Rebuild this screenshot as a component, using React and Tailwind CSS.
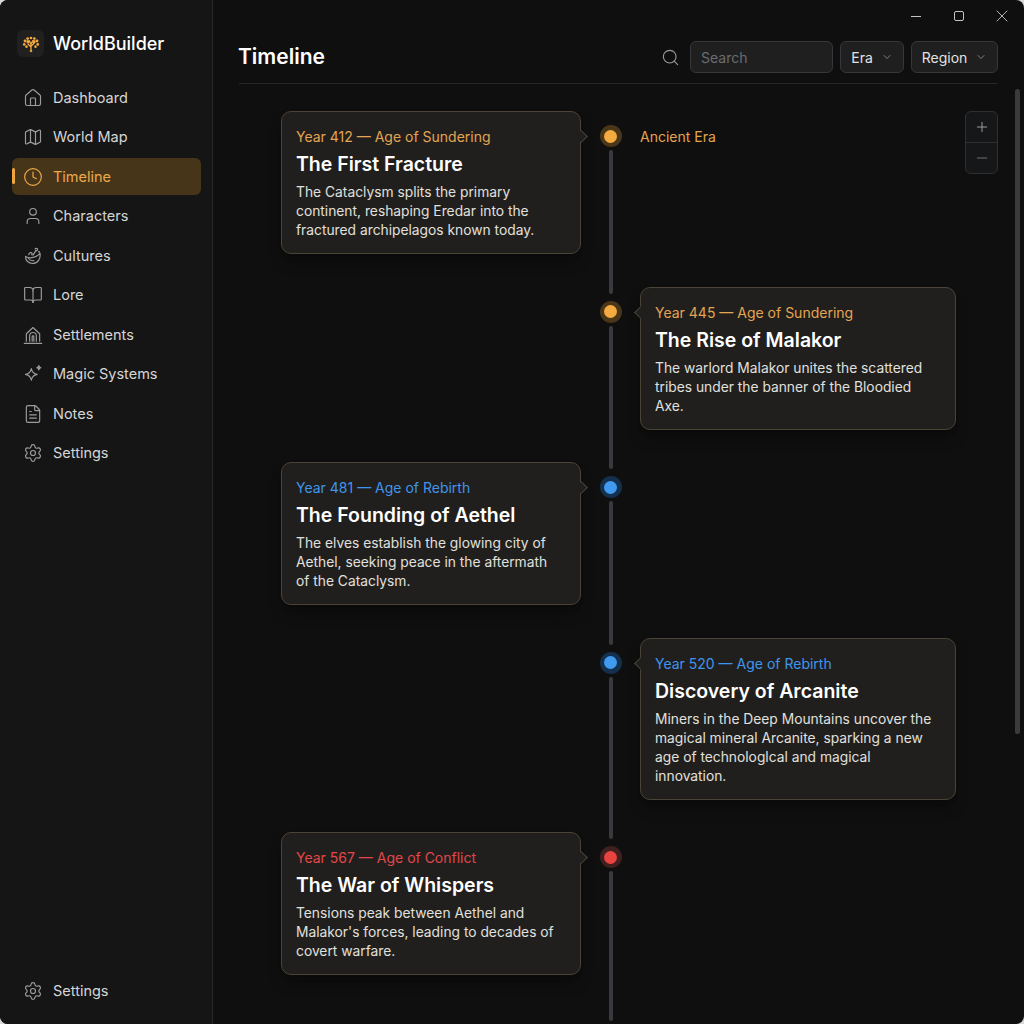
import { House, Map, Clock, User, BookOpen, FileText, Settings, Search, ChevronDown, Plus, Minus, X } from 'lucide-react';

// Sidebar icons the packages have no match for
const CulturesIcon = (props) => (
  <svg viewBox="0 0 24 24" fill="none" stroke="currentColor" strokeWidth="1.4" strokeLinecap="round" strokeLinejoin="round" {...props}>
    <path d="M3 12.500c2.500 1.500 5 2 8 1.500 4-.6 7-2.500 9.500-5 .8 6-2.500 12-9 12-5 0-8.500-3.500-8.500-8.500z" />
    <path d="M6.500 15c1.500 2 4 3 6.500 2.500" />
    <path d="M7 10.500c0-2 1.500-3 3-2.500 1.300.5 1.300 2.200.2 2.500" />
    <path d="M12 11l3.500-5.500" />
    <path d="M14.500 3.500c1-1 2.800-.8 3 .5.2 1.300-1.300 2-2.300 1.300" />
    <path d="M18.500 7c.8-.4 1.500 0 1.500.8" />
  </svg>
);

const SettlementsIcon = (props) => (
  <svg viewBox="0 0 24 24" fill="none" stroke="currentColor" strokeWidth="1.4" strokeLinecap="round" strokeLinejoin="round" {...props}>
    <path d="M1.500 22h21" />
    <path d="M4 19.500V10.500L12 3l8 7.500v9" />
    <path d="M8 19.500V13a4 4 0 0 1 8 0v6.500" />
    <path d="M11 19.500V14a1 1 0 0 1 2 0v5.500" />
  </svg>
);

const MagicIcon = (props) => (
  <svg viewBox="0 0 24 24" fill="none" stroke="currentColor" strokeWidth="1.4" strokeLinecap="round" strokeLinejoin="round" {...props}>
    <path d="M10 5.500c.8 4.300 2.700 6.200 7 7-4.300.8-6.200 2.700-7 7-.8-4.300-2.700-6.200-7-7 4.300-.8 6.200-2.700 7-7z" />
    <path d="M19 2c.3 1.500.9 2.200 2.500 2.500-1.600.3-2.200 1-2.500 2.500-.3-1.500-.9-2.200-2.500-2.500C18.100 4.200 18.700 3.500 19 2z" fill="currentColor" />
  </svg>
);

const LogoIcon = (props) => (
  <svg viewBox="0 0 24 24" fill="#f2a83e" stroke="#f2a83e" strokeLinecap="round" {...props}>
    <path d="M12 22v-9M12 16l-4-4M12 15l4-4M12 12l-2.500-4.500M12 12l2.500-4.500" fill="none" strokeWidth="1.800" />
    <g stroke="none">
      <circle cx="12" cy="4" r="1.800" />
      <circle cx="7.500" cy="4.800" r="1.800" />
      <circle cx="16.500" cy="4.800" r="1.800" />
      <circle cx="4" cy="8" r="1.900" />
      <circle cx="20" cy="8" r="1.900" />
      <circle cx="3" cy="12.500" r="1.800" />
      <circle cx="21" cy="12.500" r="1.800" />
      <circle cx="6" cy="15.500" r="1.700" />
      <circle cx="18" cy="15.500" r="1.700" />
      <circle cx="8" cy="9" r="2.200" />
      <circle cx="16" cy="9" r="2.200" />
      <path d="M10 22h4l-1-2h-2z" />
    </g>
  </svg>
);

const navItems = [
  { label: 'Dashboard', icon: House },
  { label: 'World Map', icon: Map },
  { label: 'Timeline', icon: Clock, active: true },
  { label: 'Characters', icon: User },
  { label: 'Cultures', icon: CulturesIcon },
  { label: 'Lore', icon: BookOpen },
  { label: 'Settlements', icon: SettlementsIcon },
  { label: 'Magic Systems', icon: MagicIcon },
  { label: 'Notes', icon: FileText },
  { label: 'Settings', icon: Settings },
];

const eras = {
  sundering: { text: 'text-[#e3a552]', dot: 'bg-[#f5ab3f]', ring: 'bg-[#4a3719]' },
  rebirth: { text: 'text-[#3f95ec]', dot: 'bg-[#409bf0]', ring: 'bg-[#14304d]' },
  conflict: { text: 'text-[#e2474a]', dot: 'bg-[#e8433f]', ring: 'bg-[#401f1f]' },
};

const events = [
  {
    side: 'left',
    era: 'sundering',
    year: 'Year 412 — Age of Sundering',
    title: 'The First Fracture',
    body: 'The Cataclysm splits the primary continent, reshaping Eredar into the fractured archipelagos known today.',
    label: 'Ancient Era',
  },
  {
    side: 'right',
    era: 'sundering',
    year: 'Year 445 — Age of Sundering',
    title: 'The Rise of Malakor',
    body: 'The warlord Malakor unites the scattered tribes under the banner of the Bloodied Axe.',
  },
  {
    side: 'left',
    era: 'rebirth',
    year: 'Year 481 — Age of Rebirth',
    title: 'The Founding of Aethel',
    body: 'The elves establish the glowing city of Aethel, seeking peace in the aftermath of the Cataclysm.',
  },
  {
    side: 'right',
    era: 'rebirth',
    year: 'Year 520 — Age of Rebirth',
    title: 'Discovery of Arcanite',
    body: 'Miners in the Deep Mountains uncover the magical mineral Arcanite, sparking a new age of technologlcal and magical innovation.',
  },
  {
    side: 'left',
    era: 'conflict',
    year: 'Year 567 — Age of Conflict',
    title: 'The War of Whispers',
    body: "Tensions peak between Aethel and Malakor's forces, leading to decades of covert warfare.",
    last: true,
  },
];

function NavRow({ item }) {
  const Icon = item.icon;
  return (
    <a
      className={`relative flex h-[37px] items-center gap-[10px] rounded-md px-[11px] text-[14.5px] ${
        item.active ? 'bg-[#47351a] text-[#eda94a]' : 'text-[#d6d6d6]'
      }`}
    >
      {item.active && <span className="absolute left-0 top-[10px] h-[16px] w-[3px] rounded-full bg-[#f0a63e]" />}
      <Icon className={`h-[20px] w-[20px] shrink-0 ${item.active ? 'text-[#eda94a]' : 'text-[#9c9c9c]'}`} strokeWidth={1.4} />
      {item.label}
    </a>
  );
}

function EventCard({ event }) {
  const era = eras[event.era];
  const isLeft = event.side === 'left';
  return (
    <div className="relative rounded-[10px] border border-[#4a4336] bg-[#211f1d] px-[14px] pb-[13px] pt-[14px] shadow-lg shadow-black/30">
      <span
        className={`absolute top-[20px] h-[9px] w-[9px] rotate-45 bg-[#211f1d] ${
          isLeft
            ? 'right-[-5.5px] border-r border-t border-[#4a4336]'
            : 'left-[-5.5px] border-b border-l border-[#4a4336]'
        }`}
      />
      <p className={`text-[14px] leading-[21px] ${era.text}`}>{event.year}</p>
      <h3 className="mt-[3px] text-[19.5px] font-semibold leading-[28px] text-white">{event.title}</h3>
      <p className={`mt-[5px] text-[13.8px] leading-[19px] text-[#e0e0de] ${isLeft ? 'max-w-[262px]' : ''}`}>{event.body}</p>
    </div>
  );
}

function TimelineRow({ event }) {
  const era = eras[event.era];
  const isLeft = event.side === 'left';
  const gap = event.last ? 'mb-[49px]' : 'mb-[32.5px]';
  return (
    <div className="grid grid-cols-[300px_59px_316px]">
      <div className={gap}>{isLeft && <EventCard event={event} />}</div>
      {/* rail: dot plus the segment running down to the next dot */}
      <div className={`flex flex-col items-center pt-[14px] ${event.last ? '' : 'mb-[-10px]'}`}>
        <div className={`flex h-[22px] w-[22px] shrink-0 items-center justify-center rounded-full ${era.ring}`}>
          <div className={`h-[13px] w-[13px] rounded-full ${era.dot}`} />
        </div>
        <div className="mb-[3px] mt-[3px] w-[4px] flex-1 rounded-full bg-[#393a3d]" />
      </div>
      <div className={gap}>
        {!isLeft && <EventCard event={event} />}
        {event.label && <p className="pt-[15px] text-[14px] leading-[21px] text-[#e3a552]">{event.label}</p>}
      </div>
    </div>
  );
}

export default function App() {
  return (
    <div className="h-[1024px] w-[1024px] overflow-hidden bg-[#d8d8d8] font-['Inter',sans-serif]">
      <div className="flex h-full overflow-hidden rounded-[8px] bg-[#0f0f0f]">
        {/* Sidebar */}
        <aside className="flex w-[213px] shrink-0 flex-col border-r border-[#27272a] bg-[#151515] pb-[15px] pl-3 pr-[11px] pt-[30px]">
          <div className="mb-[22px] flex items-center gap-[9px] pl-[5px]">
            <div className="flex h-[27px] w-[27px] items-center justify-center rounded-md bg-[#202020]">
              <LogoIcon className="h-[18px] w-[18px]" />
            </div>
            <span className="text-[18px] font-medium text-white">WorldBuilder</span>
          </div>
          <nav className="flex flex-col gap-[2.5px]">
            {navItems.map((item) => (
              <NavRow key={item.label} item={item} />
            ))}
          </nav>
          <div className="mt-auto">
            <NavRow item={{ label: 'Settings', icon: Settings }} />
          </div>
        </aside>

        {/* Main */}
        <main className="relative flex min-w-0 flex-1 flex-col px-[26px]">
          {/* Window controls */}
          <div className="flex h-[32px] shrink-0 items-start justify-end gap-[28px] pt-[11px]">
            <span className="mr-[5px] mt-[5px] h-px w-[10px] bg-[#c4c4c4]" />
            <span className="h-[10px] w-[10px] rounded-[2px] border border-[#c4c4c4]" />
            <X className="-mr-[14px] -mt-[5px] h-[20px] w-[20px] text-[#c4c4c4]" strokeWidth={1.1} />
          </div>

          {/* Header */}
          <header className="flex h-[52px] shrink-0 justify-between border-b border-[#27272a]">
            <h1 className="-ml-px pt-[9px] text-[21px] font-semibold leading-[32px] text-white">Timeline</h1>
            <div className="flex items-start gap-[7px] pt-[9px]">
              <Search className="mr-[3px] mt-[7px] h-[19px] w-[19px] text-[#9a9a9a]" strokeWidth={1.4} />
              <input
                placeholder="Search"
                className="h-[32px] w-[143px] rounded-md border border-[#36373a] bg-[#1f1f20] px-[10px] text-[14px] text-white outline-none placeholder:text-[#6b6c6e]"
              />
              <button className="flex h-[32px] w-[64px] items-center justify-center gap-[8px] rounded-md border border-[#36373a] bg-[#1f1f20] text-[14px] text-[#e2e2e2]">
                Era <ChevronDown className="h-[12px] w-[12px] text-[#a0a0a0]" strokeWidth={1.5} />
              </button>
              <button className="flex h-[32px] w-[87px] items-center justify-center gap-[8px] rounded-md border border-[#36373a] bg-[#1f1f20] text-[14px] text-[#e2e2e2]">
                Region <ChevronDown className="h-[12px] w-[12px] text-[#a0a0a0]" strokeWidth={1.5} />
              </button>
            </div>
          </header>

          {/* Timeline */}
          <section className="pl-[42px] pt-[27px]">
            {events.map((event) => (
              <TimelineRow key={event.title} event={event} />
            ))}
          </section>

          {/* Zoom controls */}
          <div className="absolute right-[26px] top-[111px] flex w-[33px] flex-col divide-y divide-[#2e2f31] rounded-md border border-[#2e2f31] bg-[#161718] text-[#a5a5a5]">
            <button className="flex h-[31px] items-center justify-center">
              <Plus className="h-[16px] w-[16px]" strokeWidth={1.4} />
            </button>
            <button className="flex h-[30px] items-center justify-center">
              <Minus className="h-[16px] w-[16px] text-[#777]" strokeWidth={1.4} />
            </button>
          </div>

          {/* Scrollbar */}
          <div className="absolute right-[4px] top-[89px] h-[645px] w-[5px] rounded-full bg-[#3a3b3d]" />
        </main>
      </div>
    </div>
  );
}
